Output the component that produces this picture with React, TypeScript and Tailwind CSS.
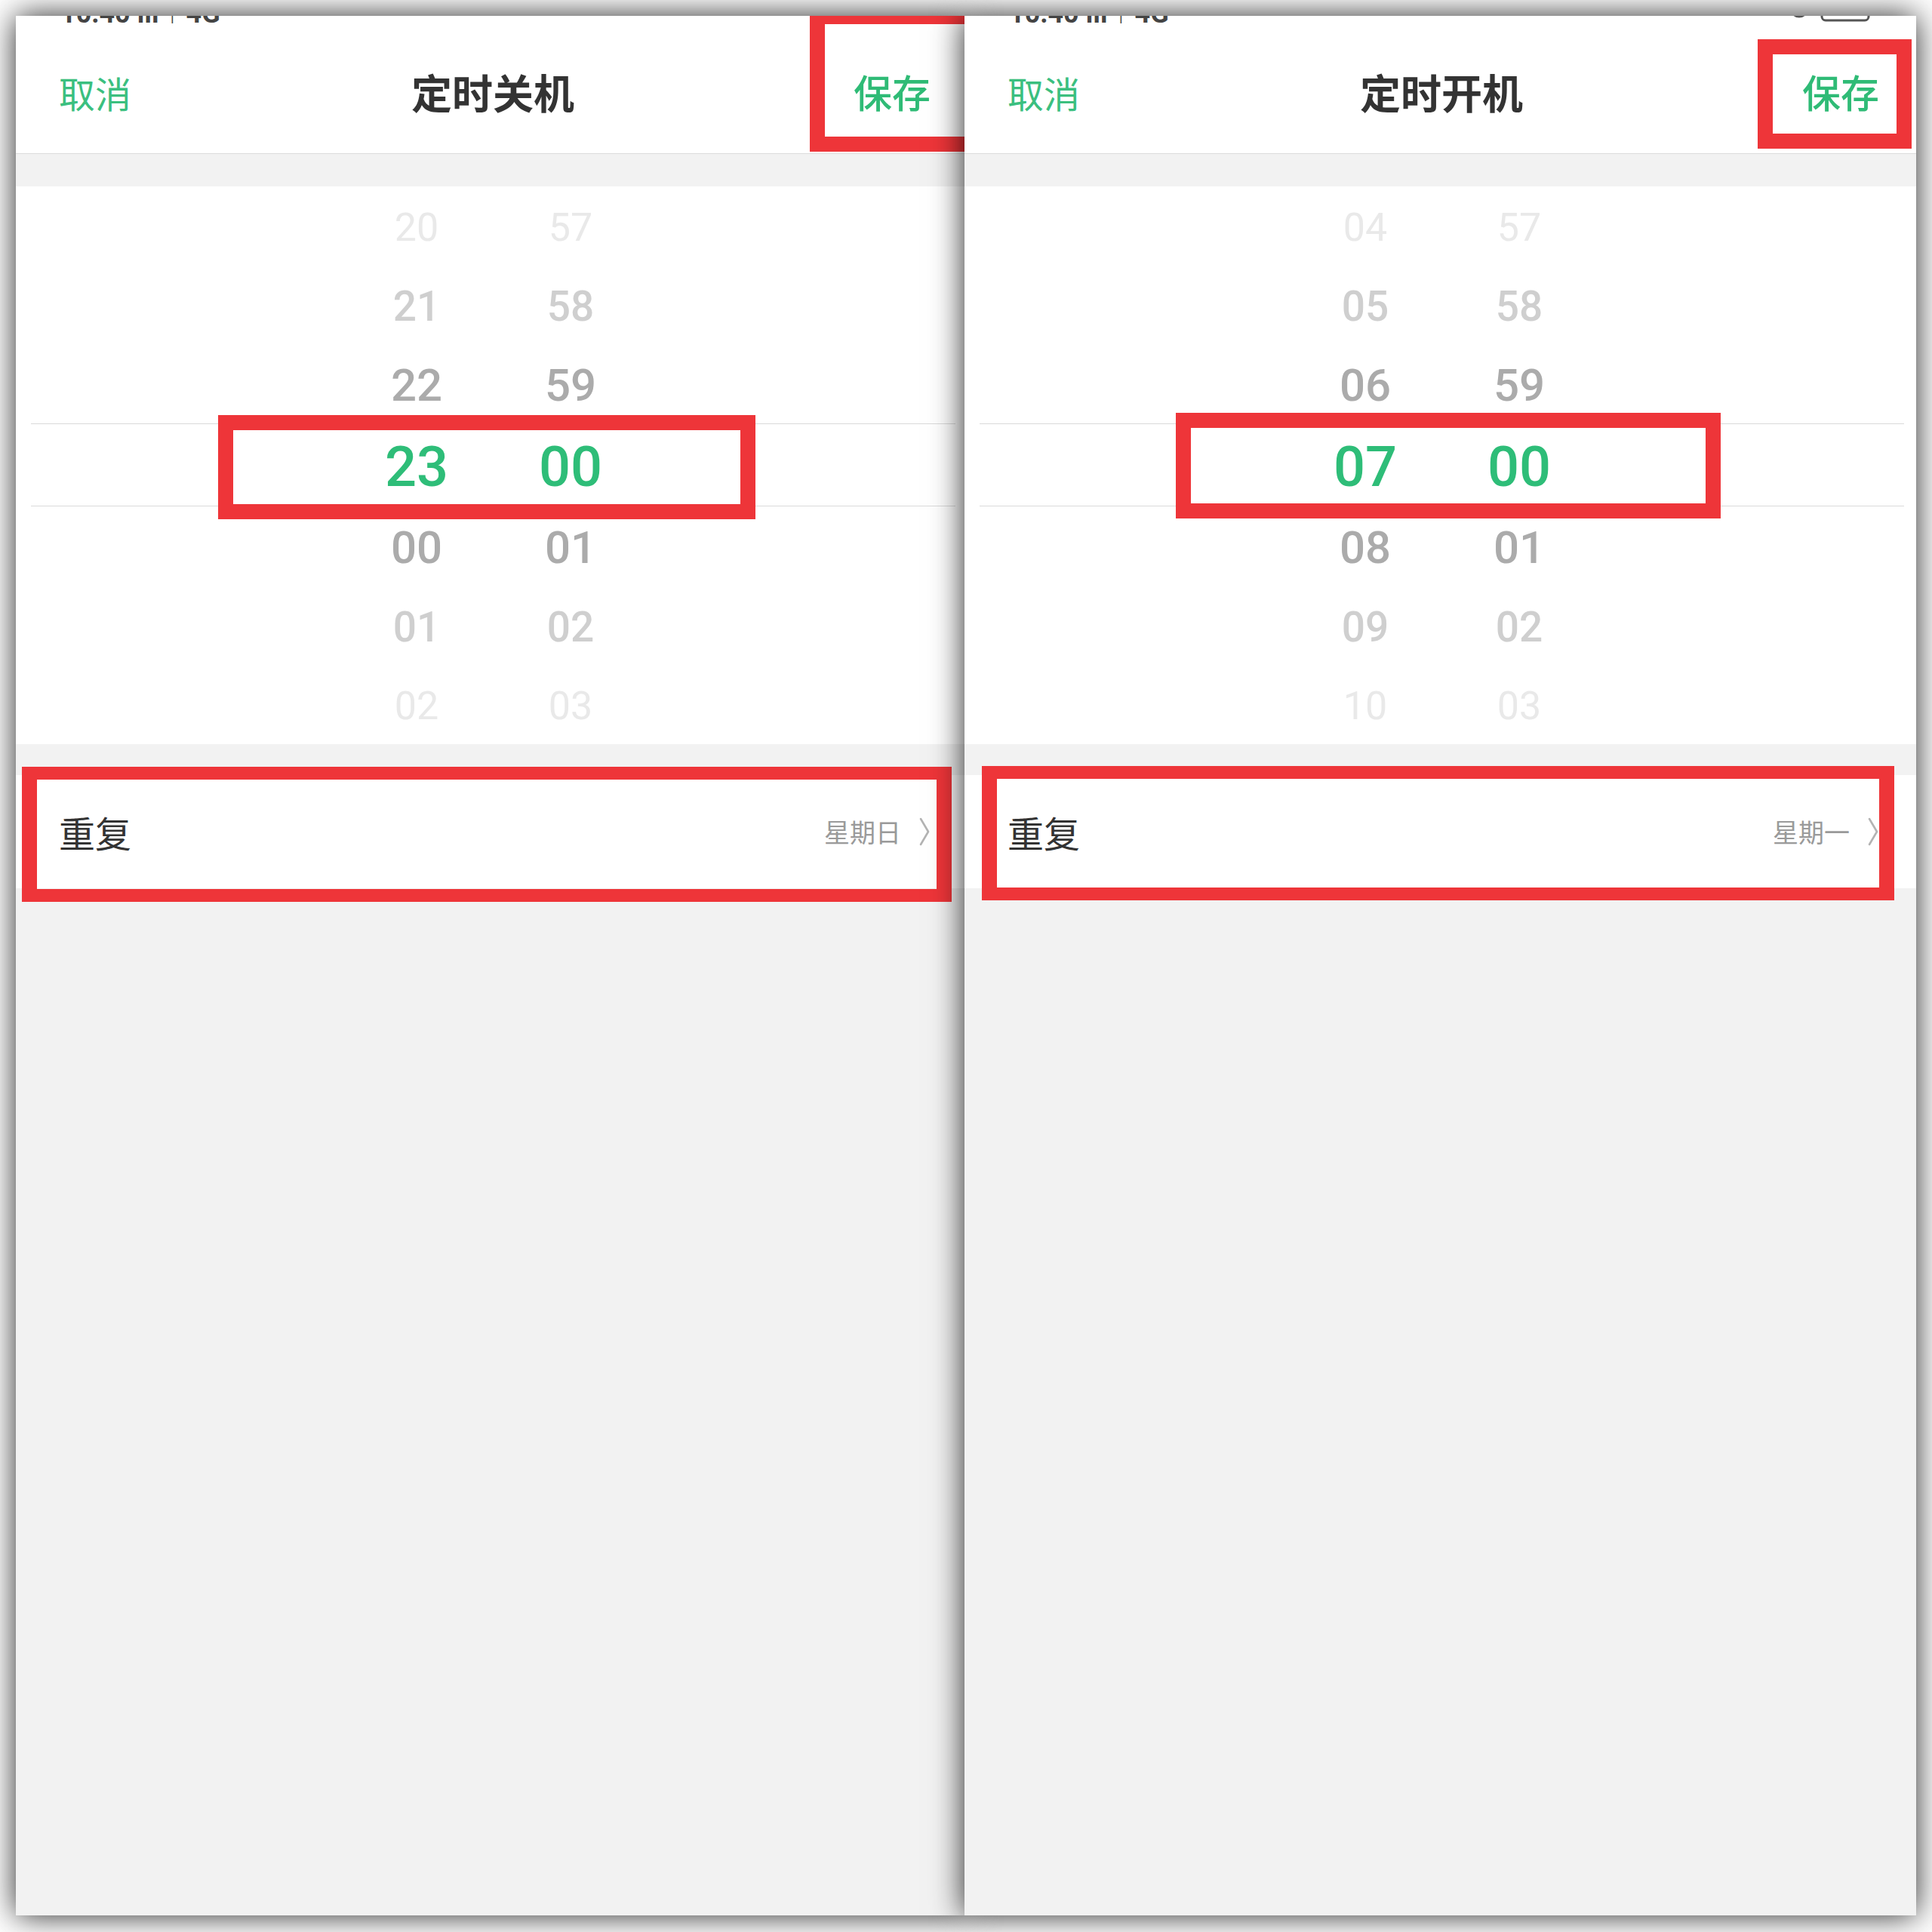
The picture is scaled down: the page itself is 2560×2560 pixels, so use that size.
import React from "react";

const cjk = "font-['Noto_Sans_CJK_SC','Noto_Sans',sans-serif]";

// class per wheel row, index 0..6 (3 = selected)
const rowText = [
  "text-[52px] text-[#e9e9e9]",
  "text-[55px] font-medium text-[#cfcfcf]",
  "text-[60px] font-medium text-[#ababab]",
  "text-[74px] font-medium text-[#2ebd78]",
  "text-[60px] font-medium text-[#ababab]",
  "text-[55px] font-medium text-[#cfcfcf]",
  "text-[52px] text-[#e9e9e9]",
];

type PanelProps = {
  title: string;
  hours: string[];
  minutes: string[];
  repeat: string;
  saveBox: string;
  pickerBox: string;
  rowBox: string;
  front?: boolean;
};

function StatusBar() {
  return (
    <div className="h-[11px] overflow-hidden bg-white flex items-start pl-[59px] pr-[59px]">
      <div className="mt-[-21px] text-[36px] leading-[36px] font-bold text-[#444] font-['Roboto',sans-serif] whitespace-nowrap">
        10:40 lıl ↑ 4G
      </div>
      <div className="ml-auto mt-[-28px]">
        <svg width="108" height="36" viewBox="0 0 108 36">
          <circle cx="12" cy="18" r="11" fill="none" stroke="#555" strokeWidth="3" />
          <rect x="42" y="6" width="62" height="28" rx="5" fill="none" stroke="#555" strokeWidth="3" />
        </svg>
      </div>
    </div>
  );
}

function Chevron() {
  return (
    <svg width="16" height="38" viewBox="0 0 16 38" className="ml-[23px]">
      <path d="M3 2 L13 19 L3 36" fill="none" stroke="#b3b3b3" strokeWidth="2.6" strokeLinecap="round" strokeLinejoin="round" />
    </svg>
  );
}

function WheelRow({ h, m, i }: { h: string; m: string; i: number }) {
  const cells = (
    <>
      <div className={`w-[204px] text-center ${rowText[i]}`}>{h}</div>
      <div className={`w-[204px] text-center ${rowText[i]}`}>{m}</div>
    </>
  );
  if (i === 3) {
    return (
      <div className="h-[110px] ml-[20px] mr-[16px] border-y border-[#dadada] flex items-center pl-[409px] pt-[6px] leading-none">
        {cells}
      </div>
    );
  }
  return <div className="h-[104.8px] flex items-center pl-[429px] pt-[5px] leading-none">{cells}</div>;
}

function Panel({ title, hours, minutes, repeat, saveBox, pickerBox, rowBox, front }: PanelProps) {
  return (
    <div
      className={`relative w-[1261px] h-[2517px] overflow-hidden bg-[#f2f2f2] flex flex-col shadow-[0_0_40px_rgba(0,0,0,0.85)] ${
        front ? "z-10 -ml-[4px]" : ""
      }`}
    >
      <StatusBar />
      <div className={`h-[172px] bg-white flex items-center pt-[8px] border-b border-[#dcdcdc] ${cjk}`}>
        <div className="ml-[57px] w-[97px] text-[48px] leading-none text-[#3bbf7f] whitespace-nowrap">取消</div>
        <div className="ml-[370px] w-[218px] text-[54px] leading-none font-bold text-[#333] whitespace-nowrap">
          {title}
        </div>
        <div className="ml-[368px] w-[102px] text-[51px] leading-none font-medium text-[#2fbb76] whitespace-nowrap">
          保存
        </div>
      </div>
      <div className="h-[43px]" />
      <div className="h-[739px] bg-white flex flex-col font-['Roboto',sans-serif]">
        {hours.map((h, i) => (
          <WheelRow key={i} h={h} m={minutes[i]} i={i} />
        ))}
      </div>
      <div className="h-[41px]" />
      <div className={`h-[150px] bg-white flex items-center pl-[57px] pr-[49px] ${cjk}`}>
        <div className="text-[48px] leading-none text-[#333]">重复</div>
        <div className="ml-auto flex items-center">
          <span className="text-[34px] leading-none text-[#9a9a9a]">{repeat}</span>
          <Chevron />
        </div>
      </div>
      <div className="flex-1" />

      {/* red annotation boxes */}
      <div className={`absolute border-[20px] border-[#ee3539] ${saveBox}`} />
      <div className={`absolute border-[20px] border-[#ee3539] ${pickerBox}`} />
      <div className={`absolute border-[20px] border-[#ee3539] ${rowBox}`} />
    </div>
  );
}

export default function App() {
  return (
    <div className="w-[2560px] h-[2560px] bg-white pt-[21px] pl-[21px] flex items-start">
      <Panel
        title="定时关机"
        hours={["20", "21", "22", "23", "00", "01", "02"]}
        minutes={["57", "58", "59", "00", "01", "02", "03"]}
        repeat="星期日"
        saveBox="left-[1052px] top-[-9px] w-[234px] h-[189px]"
        pickerBox="left-[268px] top-[529px] w-[712px] h-[138px]"
        rowBox="left-[8px] top-[995px] w-[1232px] h-[179px] border-y-[17px]"
      />
      <Panel
        front
        title="定时开机"
        hours={["04", "05", "06", "07", "08", "09", "10"]}
        minutes={["57", "58", "59", "00", "01", "02", "03"]}
        repeat="星期一"
        saveBox="left-[1051px] top-[31px] w-[204px] h-[145px]"
        pickerBox="left-[280px] top-[526px] w-[722px] h-[140px]"
        rowBox="left-[23px] top-[994px] w-[1209px] h-[178px] border-y-[17px]"
      />
    </div>
  );
}
